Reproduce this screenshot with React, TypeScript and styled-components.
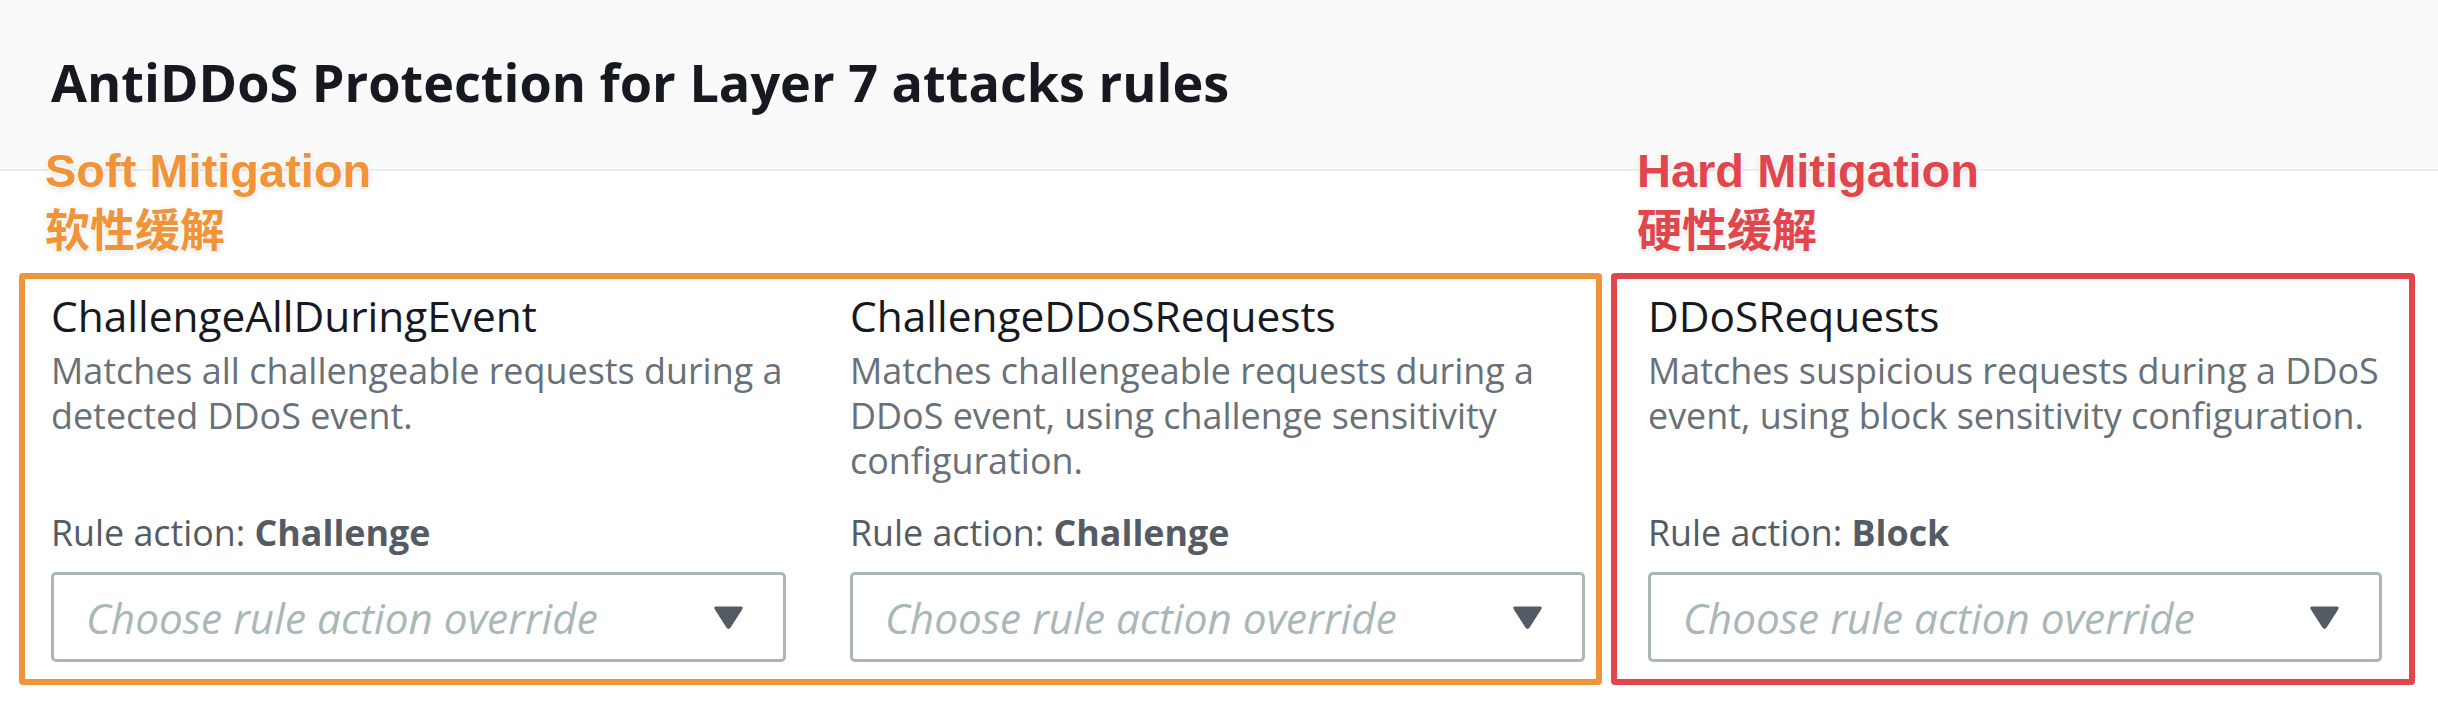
import React from 'react';
import styled, { createGlobalStyle } from 'styled-components';

const GlobalStyle = createGlobalStyle`
  body {
    margin: 0;
    background: #ffffff;
    font-family: 'Open Sans', 'Noto Sans', sans-serif;
  }
`;

const Page = styled.div`
  width: 2438px;
`;

const Header = styled.div`
  background: #fafafa;
  border-bottom: 2px solid #eaeded;
  padding: 50px 51px 55px;
`;

const Title = styled.h2`
  margin: 0;
  font-size: 52.2px;
  line-height: 64px;
  font-weight: 700;
  color: #16191f;
`;

const Groups = styled.div`
  display: flex;
  gap: 9px;
  padding: 0 23px 0 19px;
  align-items: stretch;
`;

const Group = styled.section<{ $grow: number }>`
  display: flex;
  flex-direction: column;
  flex: ${p => p.$grow} 1 0;
`;

const Annotation = styled.div<{ $color: string }>`
  margin: -28px 0 16px 26px;
  color: ${p => p.$color};
  font-weight: 700;
  text-shadow: 0 0 2px #fff, 0 0 3px #fff, 0 0 4px #fff, 0 2px 6px rgba(0, 0, 0, 0.14);
`;

const AnnotationEn = styled.div`
  font-family: 'Liberation Sans', Arial, sans-serif;
  font-size: 47px;
  line-height: 56px;
`;

const AnnotationZh = styled.div`
  font-family: 'Noto Sans CJK SC', 'Noto Sans', sans-serif;
  font-size: 45px;
  line-height: 58px;
`;

const Box = styled.div<{ $color: string; $cols: number; $pl: number; $pr: number }>`
  flex: 1;
  border: 6px solid ${p => p.$color};
  border-radius: 4px;
  display: grid;
  grid-template-columns: repeat(${p => p.$cols}, 1fr);
  column-gap: 64px;
  padding: 0 ${p => p.$pr}px 0 ${p => p.$pl}px;
`;

const Rule = styled.div`
  display: flex;
  flex-direction: column;
  padding: 9px 0 17px;
`;

const RuleName = styled.div`
  font-size: 42.4px;
  line-height: 56px;
  color: #16191f;
`;

const RuleDesc = styled.div`
  margin-top: 4px;
  font-size: 35.9px;
  line-height: 45px;
  color: #687078;
`;

const RuleAction = styled.div`
  margin-top: auto;
  padding-top: 27px;
  font-size: 35.8px;
  line-height: 44px;
  color: #545b64;

  b {
    font-weight: 700;
  }
`;

const Select = styled.div`
  margin-top: 18px;
  height: 90px;
  box-sizing: border-box;
  border: 3px solid #aab7b8;
  border-radius: 5px;
  display: flex;
  align-items: center;
  justify-content: space-between;
  padding: 0 39px 0 32px;
`;

const Placeholder = styled.span`
  font-size: 42.3px;
  font-style: italic;
  color: #aab7b8;
`;

const Caret = () => (
  <svg width="31" height="25" viewBox="0 0 31 25">
    <path
      d="M3.5 1.5 H27.5 Q31 1.5 29 4.8 L17.6 22.6 Q15.5 25.4 13.4 22.6 L2 4.8 Q0 1.5 3.5 1.5 Z"
      fill="#545b64"
    />
  </svg>
);

type RuleData = { name: string; desc: string; action: string };

const soft: RuleData[] = [
  {
    name: 'ChallengeAllDuringEvent',
    desc: 'Matches all challengeable requests during a detected DDoS event.',
    action: 'Challenge',
  },
  {
    name: 'ChallengeDDoSRequests',
    desc: 'Matches challengeable requests during a DDoS event, using challenge sensitivity configuration.',
    action: 'Challenge',
  },
];

const hard: RuleData[] = [
  {
    name: 'DDoSRequests',
    desc: 'Matches suspicious requests during a DDoS event, using block sensitivity configuration.',
    action: 'Block',
  },
];

const RuleCard: React.FC<{ rule: RuleData }> = ({ rule }) => (
  <Rule>
    <RuleName>{rule.name}</RuleName>
    <RuleDesc>{rule.desc}</RuleDesc>
    <RuleAction>
      Rule action: <b>{rule.action}</b>
    </RuleAction>
    <Select>
      <Placeholder>Choose rule action override</Placeholder>
      <Caret />
    </Select>
  </Rule>
);

const ORANGE = '#f0943a';
const RED = '#e1464c';

const App: React.FC = () => (
  <Page>
    <GlobalStyle />
    <Header>
      <Title>AntiDDoS Protection for Layer 7 attacks rules</Title>
    </Header>
    <Groups>
      <Group $grow={1583}>
        <Annotation $color={ORANGE}>
          <AnnotationEn>Soft Mitigation</AnnotationEn>
          <AnnotationZh>软性缓解</AnnotationZh>
        </Annotation>
        <Box $color={ORANGE} $cols={2} $pl={26} $pr={11}>
          {soft.map(r => (
            <RuleCard key={r.name} rule={r} />
          ))}
        </Box>
      </Group>
      <Group $grow={804}>
        <Annotation $color={RED}>
          <AnnotationEn>Hard Mitigation</AnnotationEn>
          <AnnotationZh>硬性缓解</AnnotationZh>
        </Annotation>
        <Box $color={RED} $cols={1} $pl={31} $pr={27}>
          {hard.map(r => (
            <RuleCard key={r.name} rule={r} />
          ))}
        </Box>
      </Group>
    </Groups>
  </Page>
);

export default App;
